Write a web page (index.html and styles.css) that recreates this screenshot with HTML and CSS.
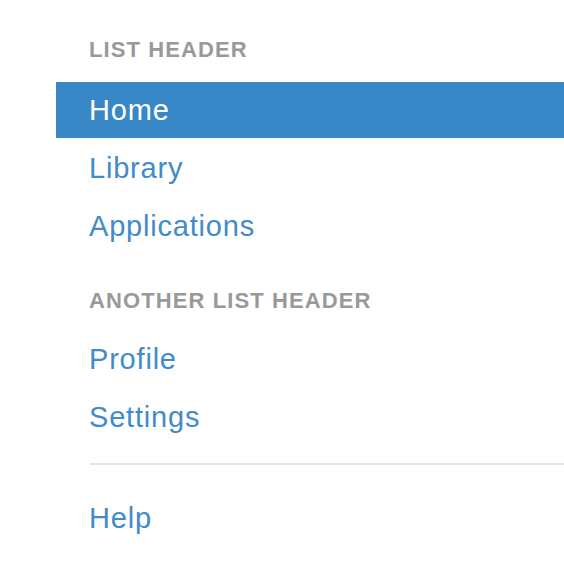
FILE: index.html
```html
<!DOCTYPE html>
<html>
<head>
<meta charset="utf-8">
<link rel="stylesheet" href="styles.css">
</head>
<body>
<ul class="nav-list">
  <li class="nav-header">List header</li>
  <li class="item active"><a href="#">Home</a></li>
  <li class="item"><a href="#">Library</a></li>
  <li class="item"><a href="#">Applications</a></li>
  <li class="nav-header second">Another list header</li>
  <li class="item"><a href="#">Profile</a></li>
  <li class="item"><a href="#">Settings</a></li>
  <li class="divider"></li>
  <li class="item"><a href="#">Help</a></li>
</ul>
</body>
</html>
```
FILE: styles.css
```css
html, body {
  margin: 0;
  padding: 0;
  background: #fff;
}
body {
  font-family: "Liberation Sans", Arial, sans-serif;
  overflow: hidden;
}
.nav-list {
  list-style: none;
  margin: 24px 0 0 56px;
  padding: 0;
  display: flex;
  flex-direction: column;
}
.nav-header {
  height: 52px;
  line-height: 52px;
  padding-left: 33px;
  font-size: 22px;
  letter-spacing: 1.1px;
  font-weight: bold;
  color: #999;
  text-transform: uppercase;
  margin-bottom: 6px;
}
.nav-header.second {
  margin-top: 21px;
  margin-bottom: 4px;
}
.item + .item {
  margin-top: 2px;
}
.item a {
  display: block;
  height: 56px;
  line-height: 56px;
  padding-left: 33px;
  font-size: 29px;
  letter-spacing: 0.8px;
  color: #428bca;
  text-decoration: none;
}
.item.active a {
  background: #3887c6;
  color: #fff;
}
.divider {
  height: 2px;
  margin: 18px 0 25px 34px;
  background: #e5e5e5;
}
```
